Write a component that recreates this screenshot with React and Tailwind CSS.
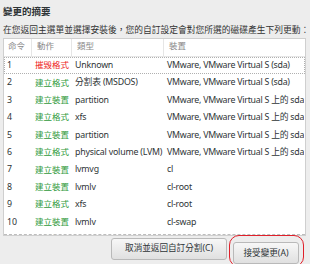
import React from "react";

const rows = [
  { n: "1", act: "摧毀格式", red: true, type: "Unknown", dev: "VMware, VMware Virtual S (sda)" },
  { n: "2", act: "建立格式", type: "分割表 (MSDOS)", dev: "VMware, VMware Virtual S (sda)" },
  { n: "3", act: "建立裝置", type: "partition", dev: "VMware, VMware Virtual S 上的 sda1" },
  { n: "4", act: "建立格式", type: "xfs", dev: "VMware, VMware Virtual S 上的 sda1" },
  { n: "5", act: "建立裝置", type: "partition", dev: "VMware, VMware Virtual S 上的 sda2" },
  { n: "6", act: "建立格式", type: "physical volume (LVM)", dev: "VMware, VMware Virtual S 上的 sda2" },
  { n: "7", act: "建立裝置", type: "lvmvg", dev: "cl" },
  { n: "8", act: "建立裝置", type: "lvmlv", dev: "cl-root" },
  { n: "9", act: "建立格式", type: "xfs", dev: "cl-root" },
  { n: "10", act: "建立裝置", type: "lvmlv", dev: "cl-swap" },
  { n: "11", act: "建立格式", type: "swap", dev: "cl-swap" },
];

export default function App() {
  return (
    <div
      className="w-[310px] h-[264px] overflow-hidden bg-[#ededed] text-[#2e3436] flex flex-col"
      style={{ fontFamily: '"Noto Sans", "Noto Sans CJK TC", sans-serif' }}
    >
      {/* Title */}
      <h1 className="px-[3px] pt-[5px] text-[9.5px] font-bold leading-[14px]">變更的摘要</h1>
      <p className="px-[3px] mt-[4px] text-[8.75px] leading-[14px] text-[#333] whitespace-nowrap">
        在您返回主選單並選擇安裝後，您的自訂設定會對您所選的磁碟產生下列更動：
      </p>

      {/* Table */}
      <div className="ml-[3px] mr-[4px] mt-[1px] h-[198px] border border-[#cfcfcf] bg-white overflow-hidden relative">
        <div className="flex h-[18px] text-[8.5px] text-[#888] border-b border-[#e6e6e6]">
          <div className="w-[28px] pl-[4px] pb-[2px] border-r border-[#e6e6e6] flex items-center">命令</div>
          <div className="w-[40px] pl-[5px] pb-[2px] border-r border-[#e6e6e6] flex items-center">動作</div>
          <div className="w-[92px] pl-[5px] pb-[2px] border-r border-[#e6e6e6] flex items-center">類型</div>
          <div className="flex-1 pl-[5px] pb-[2px] flex items-center">裝置</div>
        </div>
        {rows.map((r, i) => (
          <div
            key={r.n}
            className={`flex items-center h-[17.4px] text-[8.8px] whitespace-nowrap ${
              i === 0 ? "border border-dotted border-[#b0b0b0]" : "border border-transparent"
            }`}
          >
            <div className="w-[28px] pl-[2px]">{r.n}</div>
            <div className={`w-[40px] pl-[2px] text-[8.5px] ${r.red ? "text-[#ee1c1c]" : "text-[#2f9a3b]"}`}>
              {r.act}
            </div>
            <div className="w-[92px] pl-[2px] overflow-hidden tracking-[-0.2px]">{r.type}</div>
            <div className="flex-1 pl-[2px] overflow-hidden tracking-[-0.25px]">{r.dev}</div>
          </div>
        ))}
        <div className="absolute left-0 right-0 bottom-0 border-t border-dashed border-[#bdbdbd]" />
      </div>

      {/* Buttons */}
      <div className="flex justify-end gap-[6px] pr-[11px] mt-[2px]">
        <button className="h-[22px] w-[116px] rounded-[3px] border border-[#b9b9b9] bg-gradient-to-b from-[#f7f7f7] to-[#e0e0e0] text-[8.6px] text-[#2e3436] whitespace-nowrap">
          取消並返回自訂分割(C)
        </button>
        <div className="relative">
          <button className="h-[22px] w-[66px] rounded-[3px] border border-[#b9b9b9] bg-gradient-to-b from-[#f7f7f7] to-[#e0e0e0] text-[8.6px] text-[#2e3436] whitespace-nowrap">
            接受變更(A)
          </button>
          <div className="absolute -left-[4px] -right-[5px] -top-[3px] -bottom-[3px] rounded-[10px] border-[1.5px] border-[#e0202a]" />
        </div>
      </div>
    </div>
  );
}
